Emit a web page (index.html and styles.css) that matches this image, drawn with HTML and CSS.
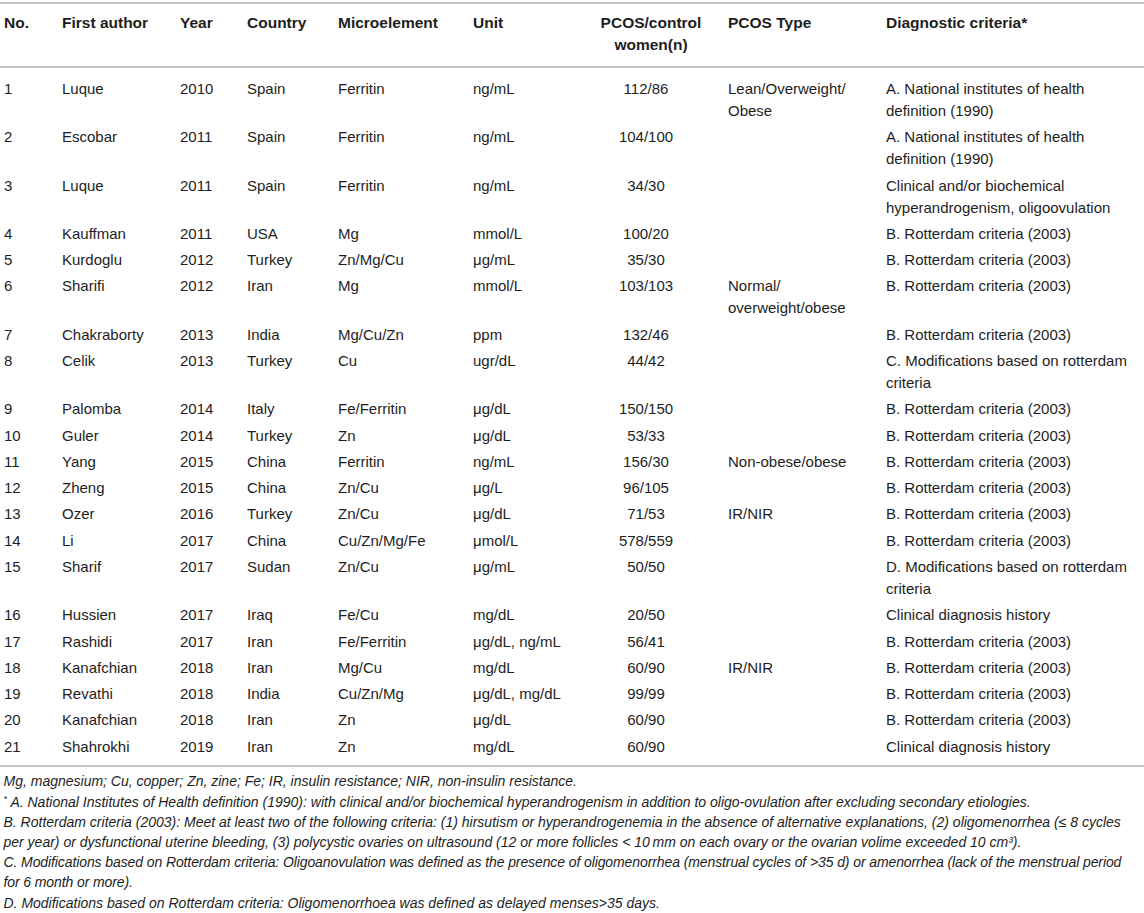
FILE: index.html
```html
<!DOCTYPE html>
<html lang="en">
<head>
<meta charset="utf-8">
<title>Table</title>
<link rel="stylesheet" href="styles.css">
</head>
<body>
<table class="data">
  <colgroup>
    <col class="c1"><col class="c2"><col class="c3"><col class="c4"><col class="c5"><col class="c6"><col class="c7"><col class="c8"><col class="c9">
  </colgroup>
  <thead>
    <tr>
      <th>No.</th><th>First author</th><th>Year</th><th>Country</th><th>Microelement</th><th>Unit</th><th class="ctr">PCOS/control women(n)</th><th>PCOS Type</th><th>Diagnostic criteria*</th>
    </tr>
  </thead>
  <tbody>
    <tr class="first"><td>1</td><td>Luque</td><td>2010</td><td>Spain</td><td>Ferritin</td><td>ng/mL</td><td class="num">112/86</td><td>Lean/Overweight/<br>Obese</td><td>A. National institutes of health definition (1990)</td></tr>
    <tr><td>2</td><td>Escobar</td><td>2011</td><td>Spain</td><td>Ferritin</td><td>ng/mL</td><td class="num">104/100</td><td></td><td>A. National institutes of health definition (1990)</td></tr>
    <tr><td>3</td><td>Luque</td><td>2011</td><td>Spain</td><td>Ferritin</td><td>ng/mL</td><td class="num">34/30</td><td></td><td>Clinical and/or biochemical hyperandrogenism, oligoovulation</td></tr>
    <tr><td>4</td><td>Kauffman</td><td>2011</td><td>USA</td><td>Mg</td><td>mmol/L</td><td class="num">100/20</td><td></td><td>B. Rotterdam criteria (2003)</td></tr>
    <tr><td>5</td><td>Kurdoglu</td><td>2012</td><td>Turkey</td><td>Zn/Mg/Cu</td><td>μg/mL</td><td class="num">35/30</td><td></td><td>B. Rotterdam criteria (2003)</td></tr>
    <tr><td>6</td><td>Sharifi</td><td>2012</td><td>Iran</td><td>Mg</td><td>mmol/L</td><td class="num">103/103</td><td>Normal/<br>overweight/obese</td><td>B. Rotterdam criteria (2003)</td></tr>
    <tr><td>7</td><td>Chakraborty</td><td>2013</td><td>India</td><td>Mg/Cu/Zn</td><td>ppm</td><td class="num">132/46</td><td></td><td>B. Rotterdam criteria (2003)</td></tr>
    <tr><td>8</td><td>Celik</td><td>2013</td><td>Turkey</td><td>Cu</td><td>ugr/dL</td><td class="num">44/42</td><td></td><td>C. Modifications based on rotterdam criteria</td></tr>
    <tr><td>9</td><td>Palomba</td><td>2014</td><td>Italy</td><td>Fe/Ferritin</td><td>μg/dL</td><td class="num">150/150</td><td></td><td>B. Rotterdam criteria (2003)</td></tr>
    <tr><td>10</td><td>Guler</td><td>2014</td><td>Turkey</td><td>Zn</td><td>μg/dL</td><td class="num">53/33</td><td></td><td>B. Rotterdam criteria (2003)</td></tr>
    <tr><td>11</td><td>Yang</td><td>2015</td><td>China</td><td>Ferritin</td><td>ng/mL</td><td class="num">156/30</td><td>Non-obese/obese</td><td>B. Rotterdam criteria (2003)</td></tr>
    <tr><td>12</td><td>Zheng</td><td>2015</td><td>China</td><td>Zn/Cu</td><td>μg/L</td><td class="num">96/105</td><td></td><td>B. Rotterdam criteria (2003)</td></tr>
    <tr><td>13</td><td>Ozer</td><td>2016</td><td>Turkey</td><td>Zn/Cu</td><td>μg/dL</td><td class="num">71/53</td><td>IR/NIR</td><td>B. Rotterdam criteria (2003)</td></tr>
    <tr><td>14</td><td>Li</td><td>2017</td><td>China</td><td>Cu/Zn/Mg/Fe</td><td>μmol/L</td><td class="num">578/559</td><td></td><td>B. Rotterdam criteria (2003)</td></tr>
    <tr><td>15</td><td>Sharif</td><td>2017</td><td>Sudan</td><td>Zn/Cu</td><td>μg/mL</td><td class="num">50/50</td><td></td><td>D. Modifications based on rotterdam criteria</td></tr>
    <tr><td>16</td><td>Hussien</td><td>2017</td><td>Iraq</td><td>Fe/Cu</td><td>mg/dL</td><td class="num">20/50</td><td></td><td>Clinical diagnosis history</td></tr>
    <tr><td>17</td><td>Rashidi</td><td>2017</td><td>Iran</td><td>Fe/Ferritin</td><td>μg/dL, ng/mL</td><td class="num">56/41</td><td></td><td>B. Rotterdam criteria (2003)</td></tr>
    <tr><td>18</td><td>Kanafchian</td><td>2018</td><td>Iran</td><td>Mg/Cu</td><td>mg/dL</td><td class="num">60/90</td><td>IR/NIR</td><td>B. Rotterdam criteria (2003)</td></tr>
    <tr><td>19</td><td>Revathi</td><td>2018</td><td>India</td><td>Cu/Zn/Mg</td><td>μg/dL, mg/dL</td><td class="num">99/99</td><td></td><td>B. Rotterdam criteria (2003)</td></tr>
    <tr><td>20</td><td>Kanafchian</td><td>2018</td><td>Iran</td><td>Zn</td><td>μg/dL</td><td class="num">60/90</td><td></td><td>B. Rotterdam criteria (2003)</td></tr>
    <tr class="last"><td>21</td><td>Shahrokhi</td><td>2019</td><td>Iran</td><td>Zn</td><td>mg/dL</td><td class="num">60/90</td><td></td><td>Clinical diagnosis history</td></tr>
  </tbody>
</table>
<div class="notes">
  <p>Mg, magnesium; Cu, copper; Zn, zine; Fe; IR, insulin resistance; NIR, non-insulin resistance.</p>
  <p><sup>*</sup> A. National Institutes of Health definition (1990): with clinical and/or biochemical hyperandrogenism in addition to oligo-ovulation after excluding secondary etiologies.</p>
  <p>B. Rotterdam criteria (2003): Meet at least two of the following criteria: (1) hirsutism or hyperandrogenemia in the absence of alternative explanations, (2) oligomenorrhea (≤ 8 cycles per year) or dysfunctional uterine bleeding, (3) polycystic ovaries on ultrasound (12 or more follicles &lt; 10&thinsp;mm on each ovary or the ovarian volime exceeded 10 cm³).</p>
  <p class="tight">C. Modifications based on Rotterdam criteria: Oligoanovulation was defined as the presence of oligomenorrhea (menstrual cycles of &gt;35 d) or amenorrhea (lack of the menstrual period for 6 month or more).</p>
  <p>D. Modifications based on Rotterdam criteria: Oligomenorrhoea was defined as delayed menses&gt;35 days.</p>
</div>
</body>
</html>
```

FILE: styles.css
```css
html, body {
  margin: 0;
  padding: 0;
  background: #ffffff;
}
body {
  font-family: "Liberation Sans", Arial, Helvetica, sans-serif;
  color: #1e1e1e;
  padding-top: 2px;
}
.data {
  width: 1144px;
  border-collapse: collapse;
  table-layout: fixed;
  font-size: 15px;
  border-top: 2px solid #c4c4c4;
  border-bottom: 2px solid #c4c4c4;
}
.c1 { width: 58px; }
.c2 { width: 118px; }
.c3 { width: 67px; }
.c4 { width: 91px; }
.c5 { width: 135px; }
.c6 { width: 109px; }
.c7 { width: 146px; }
.c8 { width: 158px; }
.c9 { width: 262px; }
.data th {
  text-align: left;
  vertical-align: top;
  font-weight: bold;
  font-size: 15.5px;
  line-height: 22px;
  padding: 7.5px 4px 10px 4px;
  border-bottom: 2px solid #c4c4c4;
}
.data th.ctr {
  text-align: center;
}
.data td {
  text-align: left;
  vertical-align: top;
  line-height: 22px;
  padding: 2.15px 4px;
}
.data td.num {
  text-align: center;
  padding-right: 14px;
}
.data tr.first td {
  padding-top: 10.5px;
}
.data tr.last td {
  padding-bottom: 7px;
}
.notes {
  font-size: 14px;
  font-style: italic;
  line-height: 20.2px;
  padding: 4.7px 10px 0 3.5px;
}
.notes p {
  margin: 0;
}
.notes .tight {
  letter-spacing: -0.1px;
}
.notes sup {
  font-size: 9px;
  line-height: 0;
  vertical-align: 5px;
}
```
